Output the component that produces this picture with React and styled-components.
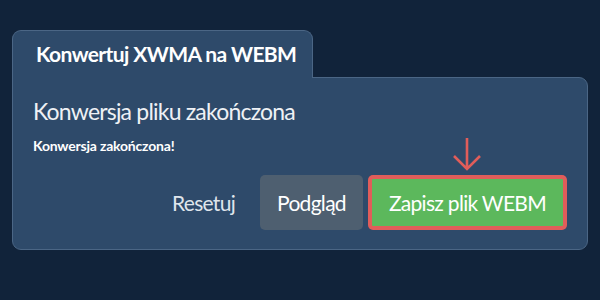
import React from 'react';
import styled, { createGlobalStyle } from 'styled-components';

const GlobalStyle = createGlobalStyle`
  html, body {
    margin: 0;
    padding: 0;
    background: #11233a;
  }
  body {
    font-family: "Lato", "Open Sans", sans-serif;
  }
`;

const App = () => (
  <Page>
    <GlobalStyle />
    <Card>
      <Tab>Konwertuj XWMA na WEBM</Tab>
      <Panel>
        <Title>Konwersja pliku zakończona</Title>
        <Message>Konwersja zakończona!</Message>
        <Actions>
          <LinkButton>Resetuj</LinkButton>
          <Button variant="secondary">Podgląd</Button>
          <Highlight>
            <Arrow width="30" height="34" viewBox="0 0 30 34">
              <path
                d="M15 1 V32 M2 19 L15 32 L28 19"
                fill="none"
                stroke="#e05d5a"
                strokeWidth="2.6"
              />
            </Arrow>
            <Button variant="success">Zapisz plik WEBM</Button>
          </Highlight>
        </Actions>
      </Panel>
    </Card>
  </Page>
);

/* styled-components */
const Page = styled.div`
  width: 600px;
  height: 300px;
  box-sizing: border-box;
  padding: 30px 12px 0 12px;
  font-family: "Lato", "Open Sans", sans-serif;
  color: #f2f4f7;
`;

const Card = styled.div`
  width: 576px;
  display: flex;
  flex-direction: column;
`;

const Tab = styled.div`
  position: relative;
  z-index: 1;
  align-self: flex-start;
  box-sizing: border-box;
  width: 301px;
  height: 48px;
  margin-bottom: -1px;
  padding: 10px 0 0 23px;
  background: #2e4a6a;
  border: 1px solid #4b6685;
  border-bottom: none;
  border-radius: 9px 9px 0 0;
  font-size: 21px;
  font-weight: 700;
  line-height: 26px;
  letter-spacing: -0.6px;
  color: #ffffff;
`;

const Panel = styled.div`
  box-sizing: border-box;
  height: 173px;
  padding: 18px 20px 19px 20px;
  background: #2e4a6a;
  border: 1px solid #4b6685;
  border-radius: 0 9px 9px 9px;
  display: flex;
  flex-direction: column;
`;

const Title = styled.h2`
  margin: 0;
  font-family: inherit;
  font-size: 23px;
  font-weight: 400;
  line-height: 30px;
  letter-spacing: -0.8px;
  color: #eef1f5;
`;

const Message = styled.p`
  margin: 11px 0 0 0;
  font-size: 14px;
  font-weight: 700;
  line-height: 18px;
  letter-spacing: -0.2px;
  color: #ffffff;
`;

const Actions = styled.div`
  margin-top: auto;
  display: flex;
  justify-content: flex-end;
  align-items: center;
  gap: 5px;
`;

const LinkButton = styled.button`
  height: 55px;
  padding: 0 20px;
  background: none;
  border: none;
  font-family: inherit;
  font-size: 21px;
  letter-spacing: -0.7px;
  color: #dfe5ec;
  cursor: pointer;
`;

const Button = styled.button`
  box-sizing: border-box;
  height: ${(p) => (p.variant === 'success' ? '47px' : '55px')};
  padding: 0 17px;
  border: none;
  border-radius: ${(p) => (p.variant === 'success' ? '1px' : '5px')};
  background: ${(p) => (p.variant === 'success' ? '#5cb85c' : '#4e5f70')};
  font-family: inherit;
  font-size: 21px;
  letter-spacing: -0.7px;
  color: #ffffff;
  cursor: pointer;
`;

const Highlight = styled.div`
  position: relative;
  display: flex;
  padding: 4px;
  background: #e05d5a;
  border-radius: 5px;
`;

const Arrow = styled.svg`
  position: absolute;
  left: 50%;
  bottom: 100%;
  margin-left: -15px;
  margin-bottom: 4px;
`;

export default App;
